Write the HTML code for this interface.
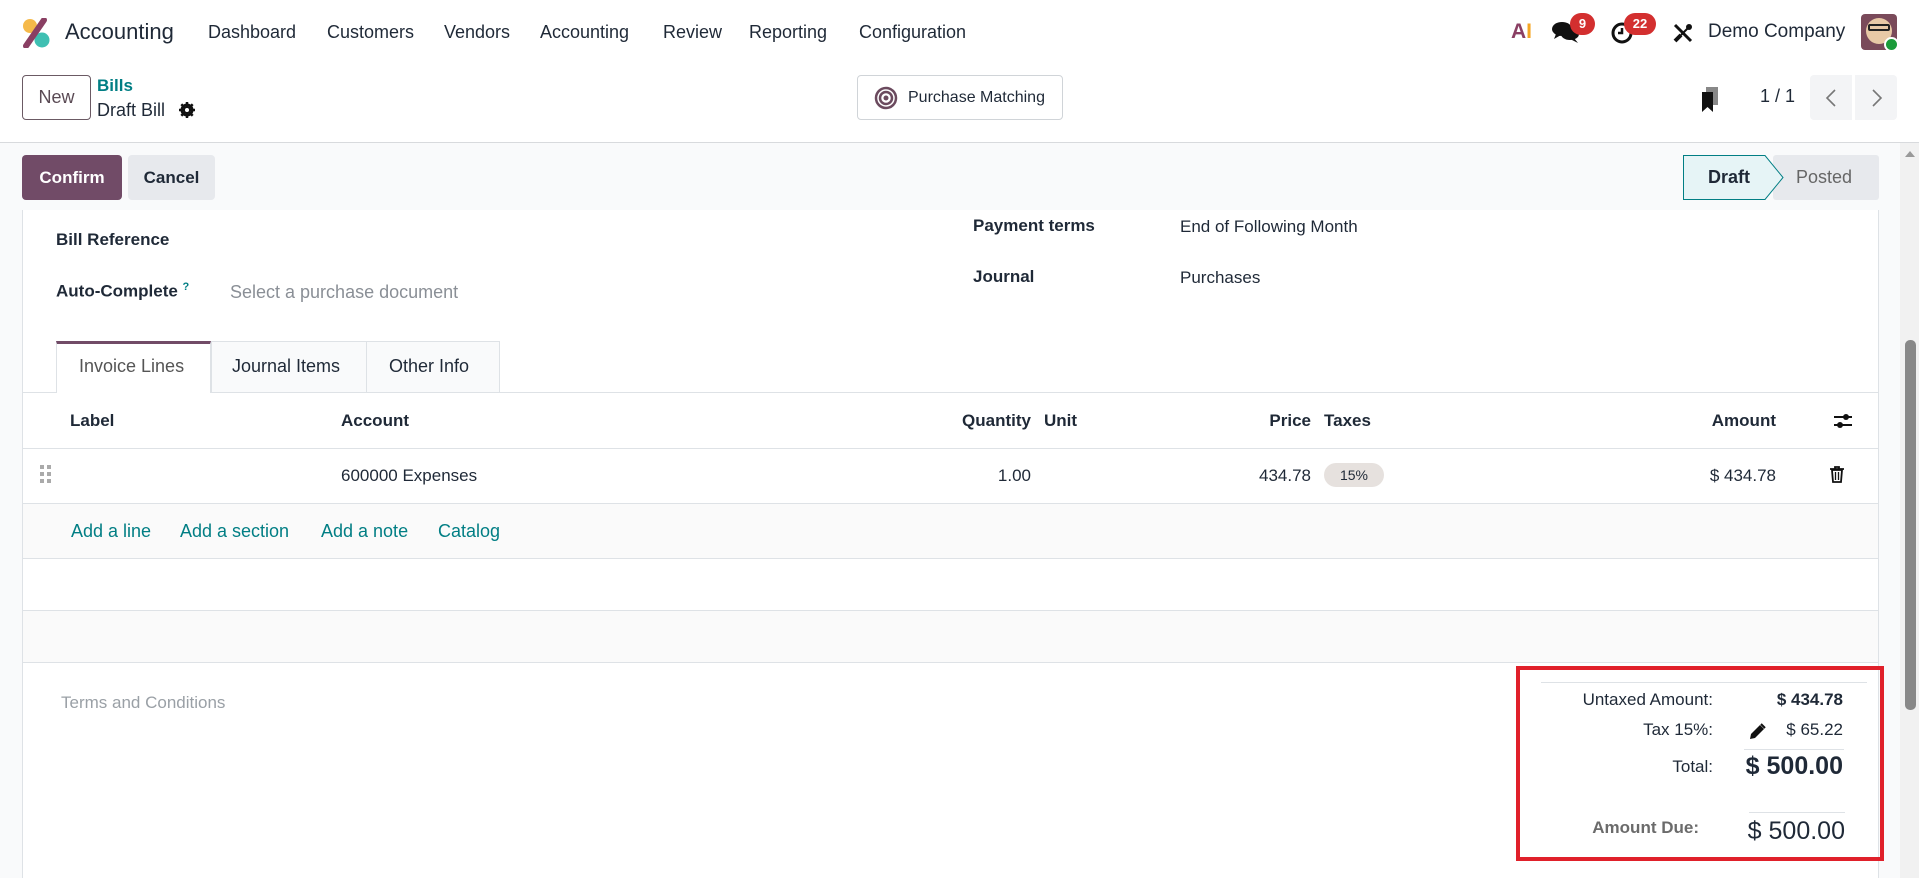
<!DOCTYPE html>
<html><head><meta charset="utf-8"><style>
*{box-sizing:border-box;margin:0;padding:0}
body{width:1919px;height:878px;overflow:hidden;background:#f9fafb;font-family:"Liberation Sans",sans-serif;color:#1f2937;font-size:17px;position:relative}
.a{position:absolute;white-space:nowrap}
.nav{position:absolute;left:0;top:0;width:1919px;height:64px;background:#fff}
.cp{position:absolute;left:0;top:64px;width:1919px;height:79px;background:#fff;border-bottom:1px solid #d8dadd}
.btn{position:absolute;border-radius:4px;font-weight:bold;display:flex;align-items:center;justify-content:center}
.sheet{position:absolute;left:22px;top:210px;width:1857px;height:668px;background:#fff;border-left:1px solid #dee2e6;border-right:1px solid #dee2e6}
.hl{position:absolute;left:22px;width:1857px;height:1px;background:#dee2e6}
.b{font-weight:bold}
.lnk{color:#017e84}
</style></head><body>
<div class="nav">
 <svg class="a" style="left:22px;top:18px" width="28" height="30" viewBox="0 0 28 30"><circle cx="8" cy="8" r="7" fill="#f5b94a"/><circle cx="20" cy="22" r="7.5" fill="#3fbfb2"/><path d="M4 28 L22 2" stroke="#8a3f63" stroke-width="6" stroke-linecap="round"/></svg>
 <div class="a" style="left:65px;top:19px;font-size:22px">Accounting</div>
 <div class="a" style="left:208px;top:22px;font-size:18px">Dashboard</div>
 <div class="a" style="left:327px;top:22px;font-size:18px">Customers</div>
 <div class="a" style="left:444px;top:22px;font-size:18px">Vendors</div>
 <div class="a" style="left:540px;top:22px;font-size:18px">Accounting</div>
 <div class="a" style="left:663px;top:22px;font-size:18px">Review</div>
 <div class="a" style="left:749px;top:22px;font-size:18px">Reporting</div>
 <div class="a" style="left:859px;top:22px;font-size:18px">Configuration</div>
 <div class="a b" style="left:1511px;top:20px;font-size:21px;color:#f5a623"><span style="color:#8a3f63">A</span>I</div>
 <svg class="a" style="left:1552px;top:20px" width="28" height="24" viewBox="0 0 28 24"><ellipse cx="10" cy="9" rx="10" ry="7" fill="#111"/><ellipse cx="18" cy="14" rx="9" ry="6" fill="#111"/><path d="M4 14 L2 19 L9 15Z M22 18 L26 23 L18 19Z" fill="#111"/></svg>
 <div class="a b" style="left:1570px;top:13px;width:25px;height:22px;border-radius:11px;background:#d32f2f;color:#fff;font-size:13px;text-align:center;line-height:22px">9</div>
 <svg class="a" style="left:1610px;top:20px" width="26" height="26" viewBox="0 0 26 26"><circle cx="12" cy="13" r="9" fill="none" stroke="#111" stroke-width="3"/><path d="M12 8 V13 H8" stroke="#111" stroke-width="2.5" fill="none"/></svg>
 <div class="a b" style="left:1624px;top:13px;width:32px;height:22px;border-radius:11px;background:#d32f2f;color:#fff;font-size:13px;text-align:center;line-height:22px">22</div>
 <svg class="a" style="left:1672px;top:22px" width="22" height="22" viewBox="0 0 22 22"><path d="M3 3 L19 19" stroke="#111" stroke-width="3"/><path d="M19 3 L9 13" stroke="#111" stroke-width="2"/><path d="M3 19 L9 13" stroke="#111" stroke-width="4"/><circle cx="17" cy="5" r="3" fill="#111"/></svg>
 <div class="a" style="left:1708px;top:21px;font-size:19px">Demo Company</div>
 <div class="a" style="left:1861px;top:14px;width:36px;height:36px;border-radius:4px;background:#7a4a5a"></div>
 <div class="a" style="left:1866px;top:18px;width:26px;height:26px;border-radius:50%;background:#e8c9a6"></div>
 <div class="a" style="left:1868px;top:24px;width:22px;height:7px;border:2px solid #222;border-radius:2px"></div>
 <div class="a" style="left:1884px;top:37px;width:15px;height:15px;border-radius:50%;background:#1a9b3a;border:2px solid #fff"></div>
</div>
<div class="cp">
 <div class="btn" style="left:22px;top:11px;width:69px;height:45px;border:1px solid #6b5a64;color:#5a4a54;font-weight:normal;font-size:18px">New</div>
 <div class="a b lnk" style="left:97px;top:12px;font-size:17px">Bills</div>
 <div class="a" style="left:97px;top:36px;font-size:18px">Draft Bill</div>
 <svg class="a" style="left:179px;top:38px" width="16" height="16" viewBox="0 0 16 16"><circle cx="8" cy="8" r="5" fill="none" stroke="#111" stroke-width="3"/><path d="M8 0V16M0 8H16M2.3 2.3L13.7 13.7M13.7 2.3L2.3 13.7" stroke="#111" stroke-width="2.5"/><circle cx="8" cy="8" r="2" fill="#fff"/></svg>
 <div class="btn" style="left:857px;top:11px;width:206px;height:45px;border:1px solid #d0d4d8;background:#fff;font-weight:normal;font-size:16px;justify-content:flex-start;padding-left:16px">
  <svg width="24" height="24" viewBox="0 0 24 24" style="margin-right:10px"><circle cx="12" cy="12" r="10" fill="none" stroke="#6b4a5e" stroke-width="2.5"/><circle cx="12" cy="12" r="6" fill="none" stroke="#6b4a5e" stroke-width="2.5"/><circle cx="12" cy="12" r="2.5" fill="#6b4a5e"/></svg>Purchase Matching</div>
 <svg class="a" style="left:1700px;top:23px" width="20" height="26" viewBox="0 0 20 26"><rect x="6" y="0" width="12" height="18" fill="#888"/><path d="M2 5 H13 V25 L7.5 20 L2 25Z" fill="#111"/></svg>
 <div class="a" style="left:1760px;top:22px;font-size:18px">1 / 1</div>
 <div class="a" style="left:1810px;top:11px;width:42px;height:45px;background:#f3f4f6;border-radius:4px 0 0 4px"></div>
 <svg class="a" style="left:1824px;top:24px" width="14" height="20" viewBox="0 0 14 20"><path d="M11 2 L3 10 L11 18" stroke="#777" stroke-width="1.6" fill="none"/></svg>
 <div class="a" style="left:1855px;top:11px;width:42px;height:45px;background:#f3f4f6;border-radius:0 4px 4px 0"></div>
 <svg class="a" style="left:1870px;top:24px" width="14" height="20" viewBox="0 0 14 20"><path d="M3 2 L11 10 L3 18" stroke="#777" stroke-width="1.6" fill="none"/></svg>
</div>
<div class="btn" style="left:22px;top:155px;width:100px;height:45px;background:#714b67;color:#fff;font-size:17px">Confirm</div>
<div class="btn" style="left:128px;top:155px;width:87px;height:45px;background:#e7e9ed;color:#1f2937;font-size:17px">Cancel</div>
<svg class="a" style="left:1683px;top:155px" width="196" height="45" viewBox="0 0 196 45"><rect x="90" y="0" width="106" height="45" rx="3" fill="#e7e9ed"/><path d="M0.5 0.5 H82 L100 22.5 L82 44.5 H0.5Z" fill="#e6f4f6" stroke="#017e84"/></svg>
<div class="a b" style="left:1708px;top:167px;font-size:18px">Draft</div>
<div class="a" style="left:1796px;top:167px;font-size:18px;color:#666">Posted</div>
<div class="a" style="left:1900px;top:143px;width:19px;height:735px;background:#f1f1f1"></div>
<div class="a" style="left:1905px;top:151px;width:0;height:0;border-left:5px solid transparent;border-right:5px solid transparent;border-bottom:6px solid #999"></div>
<div class="a" style="left:1905px;top:340px;width:11px;height:370px;background:#888;border-radius:5px"></div>

<div class="sheet"></div>
<div class="a b" style="left:56px;top:230px">Bill Reference</div>
<div class="a b" style="left:56px;top:281px">Auto-Complete <sup class="lnk" style="font-size:11px">?</sup></div>
<div class="a" style="left:230px;top:282px;color:#8a8f96;font-size:18px">Select a purchase document</div>
<div class="a b" style="left:973px;top:216px">Payment terms</div>
<div class="a" style="left:1180px;top:217px">End of Following Month</div>
<div class="a b" style="left:973px;top:267px">Journal</div>
<div class="a" style="left:1180px;top:268px">Purchases</div>

<div class="a" style="left:56px;top:341px;width:155px;height:52px;background:#fff;border-top:3px solid #714b67;border-left:1px solid #dee2e6;border-right:1px solid #dee2e6;z-index:2"></div>
<div class="a" style="left:79px;top:356px;color:#555;font-size:18px;z-index:3">Invoice Lines</div>
<div class="a" style="left:211px;top:341px;width:289px;height:51px;background:#f9fafb;border:1px solid #dee2e6;border-bottom:none"></div>
<div class="a" style="left:366px;top:341px;width:1px;height:51px;background:#dee2e6"></div>
<div class="a" style="left:232px;top:356px;font-size:18px">Journal Items</div>
<div class="a" style="left:389px;top:356px;font-size:18px">Other Info</div>
<div class="hl" style="top:392px"></div>

<div class="a b" style="left:70px;top:411px">Label</div>
<div class="a b" style="left:341px;top:411px">Account</div>
<div class="a b" style="left:931px;top:411px;width:100px;text-align:right">Quantity</div>
<div class="a b" style="left:1044px;top:411px">Unit</div>
<div class="a b" style="left:1211px;top:411px;width:100px;text-align:right">Price</div>
<div class="a b" style="left:1324px;top:411px">Taxes</div>
<div class="a b" style="left:1676px;top:411px;width:100px;text-align:right">Amount</div>
<svg class="a" style="left:1834px;top:412px" width="18" height="18" viewBox="0 0 18 18"><path d="M0 5H18M0 13H18" stroke="#111" stroke-width="2"/><circle cx="12" cy="5" r="3" fill="#111"/><circle cx="6" cy="13" r="3" fill="#111"/></svg>
<div class="hl" style="top:448px"></div>
<svg class="a" style="left:40px;top:465px" width="12" height="18" viewBox="0 0 12 18"><g fill="#aaa"><rect x="0" y="0" width="4" height="4"/><rect x="7" y="0" width="4" height="4"/><rect x="0" y="7" width="4" height="4"/><rect x="7" y="7" width="4" height="4"/><rect x="0" y="14" width="4" height="4"/><rect x="7" y="14" width="4" height="4"/></g></svg>
<div class="a" style="left:341px;top:466px">600000 Expenses</div>
<div class="a" style="left:931px;top:466px;width:100px;text-align:right">1.00</div>
<div class="a" style="left:1211px;top:466px;width:100px;text-align:right">434.78</div>
<div class="a" style="left:1324px;top:463px;width:60px;height:24px;border-radius:12px;background:#e6e1de;font-size:14px;text-align:center;line-height:24px">15%</div>
<div class="a" style="left:1676px;top:466px;width:100px;text-align:right">$ 434.78</div>
<svg class="a" style="left:1830px;top:466px" width="14" height="17" viewBox="0 0 14 17"><path d="M0 3H14M5 3V1H9V3" stroke="#111" stroke-width="1.8" fill="none"/><path d="M2 4H12L11 16H3Z" fill="none" stroke="#111" stroke-width="1.8"/><path d="M5.5 6V14M8.5 6V14" stroke="#111" stroke-width="1.3"/></svg>
<div class="a" style="left:23px;top:504px;width:1855px;height:54px;background:#fafafa"></div>
<div class="hl" style="top:503px"></div>
<div class="a lnk" style="left:71px;top:521px;font-size:18px">Add a line</div>
<div class="a lnk" style="left:180px;top:521px;font-size:18px">Add a section</div>
<div class="a lnk" style="left:321px;top:521px;font-size:18px">Add a note</div>
<div class="a lnk" style="left:438px;top:521px;font-size:18px">Catalog</div>
<div class="hl" style="top:558px"></div>
<div class="a" style="left:23px;top:610px;width:1855px;height:52px;background:#fafafa"></div>
<div class="hl" style="top:610px"></div>
<div class="hl" style="top:662px"></div>
<div class="a" style="left:61px;top:693px;color:#9aa0a6;font-size:17px">Terms and Conditions</div>

<div class="a" style="left:1516px;top:666px;width:368px;height:195px;border:4px solid #e0202a"></div>
<div class="a" style="left:1541px;top:682px;width:326px;height:1px;background:#dee2e6"></div>
<div class="a" style="left:1500px;top:690px;width:213px;text-align:right;font-size:17px">Untaxed Amount:</div>
<div class="a b" style="left:1700px;top:690px;width:143px;text-align:right;font-size:17px">$ 434.78</div>
<div class="a" style="left:1500px;top:720px;width:213px;text-align:right;font-size:17px">Tax 15%:</div>
<svg class="a" style="left:1749px;top:723px" width="17" height="17" viewBox="0 0 17 17"><path d="M1 16 L2 11 L11 2 L15 6 L6 15Z" fill="#111"/><path d="M12 1 L16 5" stroke="#111" stroke-width="2"/></svg>
<div class="a" style="left:1700px;top:720px;width:143px;text-align:right;font-size:17px">$ 65.22</div>
<div class="a" style="left:1744px;top:749px;width:100px;height:1px;background:#dee2e6"></div>
<div class="a" style="left:1500px;top:757px;width:213px;text-align:right;font-size:17px">Total:</div>
<div class="a b" style="left:1680px;top:752px;width:163px;text-align:right;font-size:25px">$ 500.00</div>
<div class="a" style="left:1749px;top:812px;width:96px;height:1px;background:#dee2e6"></div>
<div class="a b" style="left:1500px;top:818px;width:199px;text-align:right;font-size:17px;color:#6b6b6b">Amount Due:</div>
<div class="a" style="left:1680px;top:817px;width:165px;text-align:right;font-size:25px">$ 500.00</div>
</body></html>
